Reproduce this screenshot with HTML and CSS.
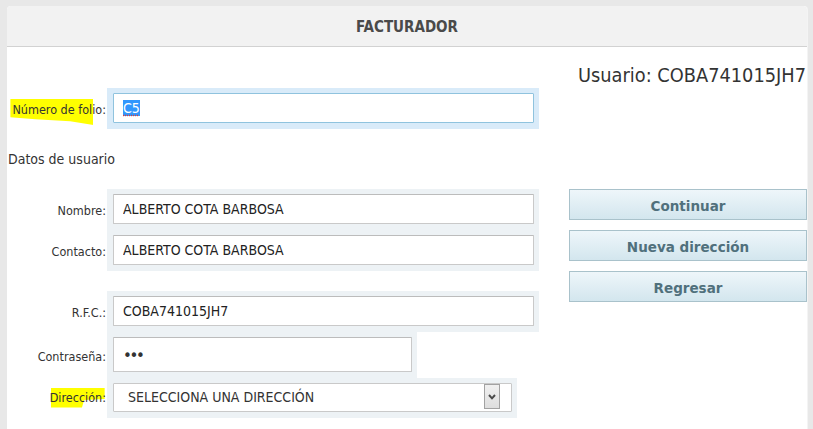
FILE: index.html
```html
<!DOCTYPE html>
<html lang="es">
<head>
<meta charset="utf-8">
<title>Facturador</title>
<link rel="stylesheet" href="styles.css">
</head>
<body>
<div class="page">
  <div class="panel">
    <div class="panel-header">FACTURADOR</div>
    <div class="panel-body">
      <div class="form-col">
        <div class="group">
          <div class="labels">
            <div class="label"><span class="mark mark--folio">Número de folio:</span></div>
          </div>
          <div class="field-box field-box--focus field-box--w432">
            <div class="input input--focus"><span class="selected">C5</span></div>
          </div>
        </div>

        <div class="section-title">Datos de usuario</div>

        <div class="group">
          <div class="labels">
            <div class="label">Nombre:</div>
            <div class="label">Contacto:</div>
          </div>
          <div class="field-box field-box--w432">
            <input class="input" type="text" value="ALBERTO COTA BARBOSA">
            <input class="input" type="text" value="ALBERTO COTA BARBOSA">
          </div>
        </div>

        <div class="group group--spaced">
          <div class="labels">
            <div class="label">R.F.C.:</div>
          </div>
          <div class="field-box field-box--w432">
            <input class="input" type="text" value="COBA741015JH7">
          </div>
        </div>

        <div class="group">
          <div class="labels">
            <div class="label label--tall">Contraseña:</div>
          </div>
          <div class="field-box field-box--w310">
            <div class="input input--password"><span class="dots">•••</span></div>
          </div>
        </div>

        <div class="group">
          <div class="labels">
            <div class="label label--select"><span class="mark mark--dir">Dirección:</span></div>
          </div>
          <div class="field-box field-box--w410">
            <div class="select">
              <span class="select-text">SELECCIONA UNA DIRECCIÓN</span>
              <span class="select-btn">
                <svg width="8" height="6" viewBox="0 0 8 6"><path d="M1 1 L4 4.3 L7 1" fill="none" stroke="#4a4a4a" stroke-width="2"/></svg>
              </span>
            </div>
          </div>
        </div>
      </div>

      <div class="side-col">
        <div class="user">Usuario: COBA741015JH7</div>
        <div class="actions">
          <button class="btn" type="button">Continuar</button>
          <button class="btn" type="button">Nueva dirección</button>
          <button class="btn" type="button">Regresar</button>
        </div>
      </div>
    </div>
  </div>
</div>
</body>
</html>
```

FILE: styles.css
```css
html, body {
  margin: 0;
  height: 100%;
  overflow: hidden;
}

body {
  background: #e8e8e8;
  font-family: "DejaVu Sans Condensed", "DejaVu Sans", sans-serif;
  color: #333;
}

.page {
  height: 100%;
  box-sizing: border-box;
  padding: 6px 0 0 7px;
}

.panel {
  width: 800px;
  height: 100%;
  background: #fff;
  border-radius: 4px 4px 0 0;
  box-shadow: 1px 0 0 #f4f4f4;
}

.panel-header {
  height: 41px;
  box-sizing: border-box;
  padding-top: 2px;
  background: #f2f2f2;
  border-bottom: 1px solid #d2d2d2;
  border-radius: 4px 4px 0 0;
  display: flex;
  align-items: center;
  justify-content: center;
  font-weight: bold;
  font-size: 15px;
  color: #4a4a4a;
}

.panel-body {
  display: flex;
}

.form-col {
  flex: 1;
  padding-top: 41px;
}

.group {
  display: flex;
}

.group--spaced {
  margin-top: 20px;
}

.labels {
  width: 100px;
  box-sizing: border-box;
  padding: 5px 1px 6px 0;
  display: flex;
  flex-direction: column;
  gap: 11px;
}

.label {
  height: 30px;
  box-sizing: border-box;
  padding-top: 3px;
  display: flex;
  align-items: center;
  justify-content: flex-end;
  font-size: 12.5px;
  color: #333;
  white-space: nowrap;
}

.label--tall {
  height: 35px;
}

.label--select {
  height: 28px;
  padding-top: 0;
}

.mark {
  position: relative;
  z-index: 0;
}

.mark::before {
  content: "";
  position: absolute;
  z-index: -1;
  background: #ffff00;
}

.mark--folio::before {
  left: -2px;
  top: -3px;
  width: 83px;
  height: 26px;
  clip-path: polygon(0 0, 100% 0, 100% 100%, 72% 86%, 30% 78%, 0 70%);
}

.mark--dir::before {
  left: 1px;
  top: -2px;
  width: 54px;
  height: 20px;
  clip-path: polygon(0 0, 100% 0, 100% 58%, 62% 62%, 58% 100%, 0 100%);
}

.field-box {
  box-sizing: border-box;
  padding: 5px 5px 6px 6px;
  background: #edf2f5;
  display: flex;
  flex-direction: column;
  gap: 11px;
}

.field-box--focus {
  background: #d9ebf9;
}

.field-box--w432 { width: 432px; }
.field-box--w310 { width: 310px; }
.field-box--w410 { width: 410px; }

.input {
  display: block;
  box-sizing: border-box;
  width: 100%;
  height: 30px;
  margin: 0;
  padding: 0 9px;
  border: 1px solid #c9c9c9;
  border-top-color: #bcbcbc;
  border-radius: 1px;
  background: #fff;
  font-family: "DejaVu Sans Condensed", "DejaVu Sans", sans-serif;
  font-size: 14px;
  color: #222;
  outline: none;
}

.input--focus {
  display: flex;
  align-items: center;
  border-color: #8fc3de;
}

.selected {
  background: #3297fd;
  color: #fff;
  text-decoration: underline dotted #e0403a;
  text-underline-offset: 2px;
}

.input--password {
  height: 35px;
  display: flex;
  align-items: center;
}

.dots {
  font-family: "DejaVu Sans", sans-serif;
  font-size: 15px;
  letter-spacing: -2.4px;
  color: #333;
  padding-top: 2px;
}

.select {
  box-sizing: border-box;
  height: 28.5px;
  display: flex;
  align-items: flex-start;
  border: 1px solid #c9c9c9;
  border-radius: 1px;
  background: #fff;
  padding-left: 14px;
  font-size: 14px;
  color: #333;
}

.select-text {
  flex: 1;
  align-self: center;
  white-space: nowrap;
}

.select-btn {
  width: 16px;
  height: 25px;
  box-sizing: border-box;
  margin-right: 11px;
  border: 1px solid #a2a2a2;
  background: linear-gradient(#f0f0f0, #dedede);
  display: flex;
  align-items: center;
  justify-content: center;
}

.section-title {
  margin: 22px 0 21px 1px;
  font-size: 14px;
  line-height: 17px;
  color: #333;
}

.side-col {
  width: 238px;
  display: flex;
  flex-direction: column;
}

.user {
  margin-top: 17px;
  padding-right: 1px;
  text-align: right;
  font-size: 19.8px;
  line-height: 23px;
  white-space: nowrap;
  color: #333;
}

.actions {
  margin-top: 102px;
  display: flex;
  flex-direction: column;
  gap: 10px;
}

.btn {
  height: 31px;
  box-sizing: border-box;
  margin: 0;
  padding: 3px 0 0;
  border: 1px solid #a9c2cb;
  border-radius: 0;
  background: linear-gradient(#eef6fa, #d3e6ee);
  font-family: "DejaVu Sans", sans-serif;
  font-weight: bold;
  font-size: 13.5px;
  color: #50707c;
  cursor: pointer;
}
```
